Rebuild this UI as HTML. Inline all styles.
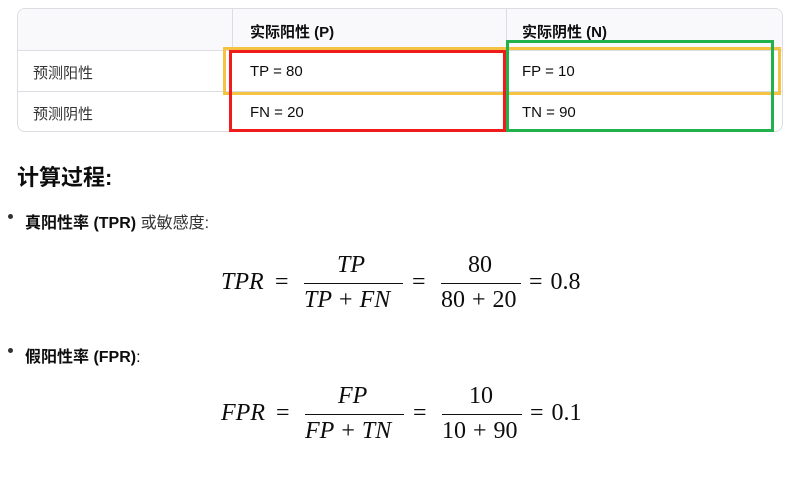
<!DOCTYPE html>
<html><head><meta charset="utf-8"><style>
body{margin:0;width:791px;height:481px;background:#fff;position:relative;overflow:hidden;font-family:"Liberation Sans","Noto Sans CJK SC",sans-serif;color:#0d0d0d}
.a{position:absolute;white-space:nowrap}
.tbl{position:absolute;left:17px;top:8px;width:764px;height:122px;border:1px solid #dcdce3;border-radius:8px;overflow:hidden}
.hdr{position:absolute;left:0;top:0;width:100%;height:41px;background:#f9f9fb;border-bottom:1px solid #dcdce3}
.hl{position:absolute;left:0;top:82px;width:100%;height:1px;background:#dcdce3}
.vl{position:absolute;top:0;width:1px;height:41px;background:#dcdce3}
.c{position:absolute;font-size:15px}
.b{font-weight:bold}
.box{position:absolute;box-sizing:border-box}
.m{font-family:"Liberation Serif","DejaVu Serif",serif;font-size:24px;position:absolute;white-space:nowrap;line-height:28px}
.i{font-style:italic}
.p{margin:0 7px;font-style:normal}
.bar{position:absolute;height:1px;background:#111}
.dot{position:absolute;width:5px;height:5px;border-radius:50%;background:#333}
</style></head><body>
<div class="tbl">
<div class="hdr"></div>
<div class="vl" style="left:214px"></div>
<div class="vl" style="left:488px"></div>
<div class="hl"></div>
<div class="c b" style="left:232px;top:12px">实际阳性 (P)</div>
<div class="c b" style="left:504px;top:12px">实际阴性 (N)</div>
<div class="c" style="left:15px;top:53px;color:#333">预测阳性</div>
<div class="c" style="left:15px;top:94px;color:#333">预测阴性</div>
<div class="c" style="left:232px;top:54px">TP = 80</div>
<div class="c" style="left:504px;top:54px">FP = 10</div>
<div class="c" style="left:232px;top:95px">FN = 20</div>
<div class="c" style="left:504px;top:95px">TN = 90</div>
</div>
<div class="box" style="left:223px;top:47px;width:558px;height:48px;border:3px solid #f5c242"></div>
<div class="box" style="left:229px;top:50px;width:277px;height:82px;border:3px solid #f01b1b"></div>
<div class="box" style="left:506px;top:40px;width:268px;height:92px;border:3px solid #22b14c"></div>

<div class="a b" style="left:17px;top:160px;font-size:22px">计算过程:</div>
<div class="dot" style="left:8px;top:214px"></div>
<div class="a" style="left:25px;top:209px;font-size:16px"><b>真阳性率 (TPR)</b> <span style="color:#333">或敏感度:</span></div>
<div class="dot" style="left:8px;top:348px"></div>
<div class="a" style="left:25px;top:343px;font-size:16px"><b>假阳性率 (FPR)</b>:</div>

<div class="m i" style="left:221px;top:268px">TPR</div>
<div class="m" style="left:275px;top:268px">=</div>
<div class="m i" style="left:337px;top:251px">TP</div>
<div class="bar" style="left:304px;top:283px;width:99px"></div>
<div class="m" style="left:304px;top:286px"><span class="i">TP</span><span class="p">+</span><span class="i">FN</span></div>
<div class="m" style="left:412px;top:268px">=</div>
<div class="m" style="left:468px;top:251px">80</div>
<div class="bar" style="left:441px;top:283px;width:80px"></div>
<div class="m" style="left:441px;top:286px">80<span class="p">+</span>20</div>
<div class="m" style="left:529px;top:268px">=<span style="margin-left:8px">0.8</span></div>

<div class="m i" style="left:221px;top:399px">FPR</div>
<div class="m" style="left:276px;top:399px">=</div>
<div class="m i" style="left:338px;top:382px">FP</div>
<div class="bar" style="left:305px;top:414px;width:99px"></div>
<div class="m" style="left:305px;top:417px"><span class="i">FP</span><span class="p">+</span><span class="i">TN</span></div>
<div class="m" style="left:413px;top:399px">=</div>
<div class="m" style="left:469px;top:382px">10</div>
<div class="bar" style="left:442px;top:414px;width:80px"></div>
<div class="m" style="left:442px;top:417px">10<span class="p">+</span>90</div>
<div class="m" style="left:530px;top:399px">=<span style="margin-left:8px">0.1</span></div>
</body></html>
